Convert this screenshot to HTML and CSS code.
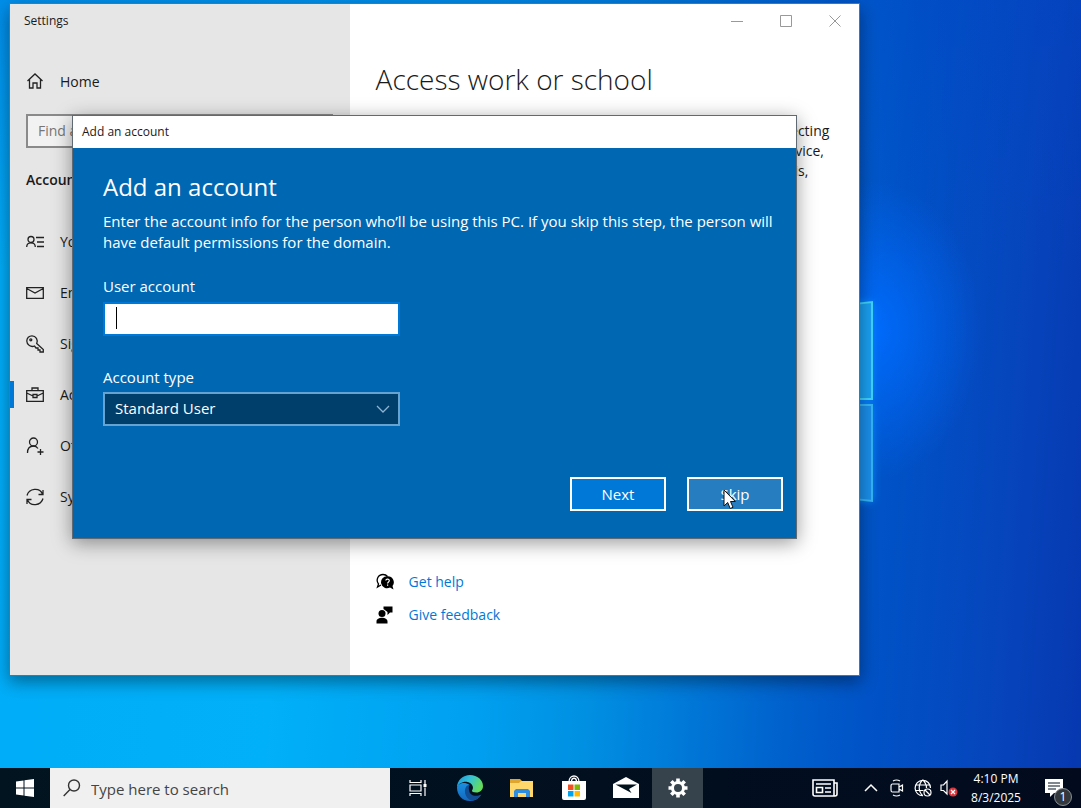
FILE: index.html
```html
<!DOCTYPE html>
<html lang="en">
  <head>
    <meta charset="UTF-8" />
    <meta name="viewport" content="width=device-width, initial-scale=1.0" />
    <title>Settings</title>
    <link rel="stylesheet" href="styles.css">
  </head>
  <body>
    <main class="desktop">
      <svg class="logo-light" viewBox="0 0 120 204">
        <g fill="#1a9ff0" stroke="#3fd3fa" stroke-width="2">
          <path d="M1 15 L118 2 V99 H1 Z" />
          <path d="M1 105 H118 V201 L1 188 Z" fill="#1a8ee8" stroke="#35b4f4" />
        </g>
      </svg>

      <section class="window">
        <aside class="sidebar">
          <div class="window-title">Settings</div>
          <a class="nav-link home" href="#">
            <svg class="icon" viewBox="0 0 18 18"><path d="M1.500 9 L9 2 L16.500 9 M3.500 7.500 V16 H7 V11 H11 V16 H14.500 V7.500" /></svg>
            Home
          </a>
          <input class="find" type="text" placeholder="Find a setting" aria-label="Find a setting">
          <h2 class="section-title">Accounts</h2>
          <nav class="nav">
            <a class="nav-link" href="#">
              <svg class="icon" viewBox="0 0 18 18"><circle cx="5" cy="6.500" r="3" /><path d="M.7 14 C.7 8.500 9.300 8.500 9.300 14 M10 4.500 H18 M11 9 H18 M11 13.500 H18" /></svg>
              Your info
            </a>
            <a class="nav-link" href="#">
              <svg class="icon" viewBox="0 0 18 18"><path d="M.7 3.700 H17.300 V14.300 H.7 Z M.7 4.500 L9 9 L17.300 4.500" /></svg>
              Email &amp; accounts
            </a>
            <a class="nav-link" href="#">
              <svg class="icon" viewBox="0 0 18 18"><path d="M10.700 8.500 L17.300 14.500 V17 H14 V15 H12 V13 H10 L8.500 11 C5 12.500 .8 10 .8 6 C.8 3 3 .8 6 .8 C10 .8 12.300 5 10.700 8.500 Z" /><circle cx="4.800" cy="4.800" r="1" /></svg>
              Sign-in options
            </a>
            <a class="nav-link active" href="#">
              <svg class="icon" viewBox="0 0 18 18"><path d="M.7 4.700 H17.300 V15.300 H.7 Z M6 4.500 V2 H12 V4.500 M.7 7 L7 10 M11 10 L17.300 7 M7 8.500 H11 V11.500 H7 Z" /></svg>
              Access work or school
            </a>
            <a class="nav-link" href="#">
              <svg class="icon" viewBox="0 0 18 18"><circle cx="7.500" cy="5" r="4" /><path d="M1.500 16 C1.500 11.500 4 9 7.500 9 C9.500 9 11 10 12 11.500 M14.500 12 V18 M11.500 15 H17.500" /></svg>
              Other users
            </a>
            <a class="nav-link" href="#">
              <svg class="icon" viewBox="0 0 18 18"><path d="M1 7.500 C3 .3 13.500 -1 16.500 6 M17 2 V6.500 H12.500 M17 10.500 C15 17.700 4.500 19 1.500 12 M1 16 V11.500 H5.500" /></svg>
              Sync your settings
            </a>
          </nav>
        </aside>

        <div class="page">
          <div class="window-controls">
            <button aria-label="Minimize"><svg viewBox="0 0 12 12"><path d="M0 6.500 H12" /></svg></button>
            <button aria-label="Maximize"><svg viewBox="0 0 12 12"><path d="M.5 .5 H11.500 V11.500 H.5 Z" /></svg></button>
            <button aria-label="Close"><svg viewBox="0 0 12 12"><path d="M.5 .5 L11.500 11.500 M11.500 .5 L.5 11.500" /></svg></button>
          </div>
          <h1>Access work or school</h1>
          <p class="intro">
            Get access to resources like email, apps, and the network. Connecting<br>
            means your work or school might control some things on this device,<br>
            such as which settings you can change. For specific info about this,<br>
            ask them.
          </p>
          <div class="help-links">
            <a href="#">
              <svg class="help-icon" viewBox="0 0 18 18">
                <path d="M5 12 L1.500 14 L2.500 11 C-.5 7 2 1.500 7 1.500 C9 1.500 10.500 2.200 11.500 3.500" fill="none" stroke="#000" stroke-width="1.300" />
                <path d="M11.500 3.300 A6 6 0 1 0 14 14.500 L17.500 16.500 L16.500 13 A6 6 0 0 0 11.500 3.300 Z" />
                <path d="M9.800 7.500 C10 5.500 13.500 5.700 13.300 7.800 C13.200 9 11.600 9 11.600 10.500 M11.600 11.500 V12.700" fill="none" stroke="#fff" stroke-width="1.200" />
              </svg>
              Get help
            </a>
            <a href="#">
              <svg class="help-icon" viewBox="0 0 18 18"><circle cx="6" cy="7.500" r="3.500" /><path d="M.5 17.500 V15.500 C.5 10.500 11.500 10.500 11.500 15.500 V17.500 Z M7.500 .5 H16.500 V6.500 H14 L11.500 9 V6 L7.500 3 Z" /></svg>
              Give feedback
            </a>
          </div>
        </div>
      </section>

      <form class="dialog" onsubmit="return false">
        <div class="dialog-title">Add an account</div>
        <div class="dialog-body">
          <h2>Add an account</h2>
          <p>Enter the account info for the person who’ll be using this PC. If you skip this step, the person will<br>have default permissions for the domain.</p>
          <div class="field">
            <label for="user">User account</label>
            <input id="user" type="text">
          </div>
          <div class="field">
            <label for="type">Account type</label>
            <select id="type">
              <option>Standard User</option>
              <option>Administrator</option>
            </select>
          </div>
          <div class="actions">
            <button class="next">Next</button>
            <button class="skip">Skip</button>
          </div>
        </div>
      </form>

      <svg class="cursor" viewBox="0 0 13 21"><path d="M1 1 V17 L4.700 13.500 L7.200 19.500 L10 18.300 L7.500 12.500 H12.300 Z" /></svg>
    </main>

    <footer class="taskbar">
      <button class="start" aria-label="Start">
        <svg width="18" height="18" viewBox="0 0 18 18"><path fill="#fff" d="M0 2.500 L7.500 1.500 V8.500 H0 Z M8.500 1.300 L18 0 V8.500 H8.500 Z M0 9.500 H7.500 V16.500 L0 15.500 Z M8.500 9.500 H18 V18 L8.500 16.700 Z" /></svg>
      </button>
      <label class="search">
        <svg width="18" height="18" viewBox="0 0 18 18"><circle cx="11" cy="6.500" r="5.500" /><path d="M7 10.500 L.7 17" /></svg>
        <input type="text" placeholder="Type here to search">
      </label>
      <div class="apps">
        <button aria-label="Task View">
          <svg width="18" height="18" viewBox="0 0 18 18"><path fill="none" stroke="#fff" stroke-width="1.200" d="M1 1 V3.500 H12 V1 M1 6 H12 V12 H1 Z M1 17 V14.500 H12 V17 M16 1 V5 M16 8.500 V17" /><path fill="#fff" d="M14.500 5 H17.500 V8 H14.500 Z" /></svg>
        </button>
        <button aria-label="Edge">
          <svg width="26" height="26" viewBox="0 0 26 26">
            <defs>
              <linearGradient id="edge-top" x1="0" y1="0" x2="1" y2=".4"><stop offset="0" stop-color="#1b93dd" /><stop offset=".5" stop-color="#35c1d6" /><stop offset="1" stop-color="#63dc5c" /></linearGradient>
              <linearGradient id="edge-side" x1="0" y1="0" x2="0" y2="1"><stop offset="0" stop-color="#1b8fe0" /><stop offset="1" stop-color="#1268be" /></linearGradient>
            </defs>
            <path fill="url(#edge-side)" d="M0 12.500 C1 8 8 6.500 12.500 10 C9 12 9 18 13 20.500 C17 23 21 22 24 20 C21 24.500 17 26 13 26 C5 26 0 20 0 12.500 Z" />
            <path fill="#124e93" d="M9 12 C6 17 9.500 24.500 15 25.700 C19 25 22 23.500 24.500 19.500 C18 22.500 12.500 20 12 15 C11.500 12 12 11.500 12.500 10 C11 10 10 10.500 9 12 Z" />
            <path fill="url(#edge-top)" d="M0 12.500 C0 5 6 0 13 0 C20.500 0 26 5 26 11 C26 15 23 17.500 19.500 17.500 C16 17.500 14.800 16.500 15 15.500 C17.500 12.500 15 8 10.500 7 C6 6.200 1.500 8.500 0 12.500 Z" />
          </svg>
        </button>
        <button aria-label="File Explorer">
          <svg width="24" height="20" viewBox="0 0 24 20"><path fill="#e0a52e" d="M0 1 H10 L12 3 H23 V19 H0 Z" /><path fill="#ffd76a" d="M0 5 H9 L11 3 H23 V19 H0 Z" /><path fill="#2f8de0" d="M4 19 V13 L6 11 H18 L20 13 V19 H16 V15 H8 V19 Z" /></svg>
        </button>
        <button aria-label="Store">
          <svg width="26" height="26" viewBox="0 0 26 26"><path fill="none" stroke="#fff" stroke-width="1.300" d="M8 7 C8 -1 18 -1 18 7 M10.500 7 C10.500 2 15.500 2 15.500 7" /><path fill="#fff" d="M1 6 H25 V23 Q25 25 23 25 H3 Q1 25 1 23 Z" /><path fill="#f25022" d="M7 9.500 H12.500 V15 H7 Z" /><path fill="#7fba00" d="M13.500 9.500 H19 V15 H13.500 Z" /><path fill="#00a4ef" d="M7 16 H12.500 V21.500 H7 Z" /><path fill="#ffb900" d="M13.500 16 H19 V21.500 H13.500 Z" /></svg>
        </button>
        <button aria-label="Mail">
          <svg width="26" height="22" viewBox="0 0 26 22"><path fill="#fff" d="M0 7 L13 0 L26 7 V21 H0 Z" /><path fill="#02121d" d="M2.500 7.500 H24 L16 12 L18.500 16 Z" /></svg>
        </button>
        <button class="running" aria-label="Settings">
          <svg width="20" height="20" viewBox="0 0 20 20"><circle cx="10" cy="10" r="5.500" fill="none" stroke="#fff" stroke-width="3" /><path stroke="#fff" stroke-width="3.600" d="M10 .5 V4 M10 16 V19.500 M.5 10 H4 M16 10 H19.500 M3.300 3.300 L5.600 5.600 M14.400 14.400 L16.700 16.700 M3.300 16.700 L5.600 14.400 M14.400 5.600 L16.700 3.300" /></svg>
        </button>
      </div>
      <div class="tray">
        <button class="news" aria-label="News">
          <svg width="26" height="18" viewBox="0 0 26 18"><path d="M22 17 H3 Q1 17 1 15 V1 H22 V17 H23 Q25 17 25 15 V4 H22 M4 5 H19 M4.500 8.500 H10.500 V13.500 H4.500 Z M13 9 H19 M13 13 H19" stroke-width="1.600" /></svg>
        </button>
        <button aria-label="Show hidden icons">
          <svg width="14" height="18" viewBox="0 0 14 18"><path d="M1 12 L7 6 L13 12" stroke-width="1.500" /></svg>
        </button>
        <button aria-label="Meet Now">
          <svg width="14" height="18" viewBox="0 0 14 18"><path d="M3 2 Q6.500 0 10 2 M3 16 Q6.500 18 10 16 M2.500 5 H9 V13 H2.500 Q1 13 1 11 V7 Q1 5 2.500 5 Z M9 8 L12.500 6 V12 L9 10" /></svg>
        </button>
        <button aria-label="Network">
          <svg width="18" height="18" viewBox="0 0 18 18"><path d="M16.500 9 A7.700 7.700 0 1 0 9 16.700 M8.800 1 C4 5 4 12.500 8.800 16.700 M8.800 1 C11.500 3.500 12.500 6 12.500 9 M1.500 6 H16 M1.500 11.500 H9.500" /><circle cx="13.500" cy="13.500" r="3.500" /><path d="M11 11 L16 16" /></svg>
        </button>
        <button aria-label="Volume">
          <svg width="18" height="18" viewBox="0 0 18 18"><path d="M1 6 H3.500 L7 2 V15 L3.500 11.500 H1 Z" /><circle cx="13" cy="13" r="4.500" fill="#d9363e" stroke="none" /><path d="M11 11 L15 15 M15 11 L11 15" /></svg>
        </button>
        <div class="clock"><span>4:10 PM</span><span>8/3/2025</span></div>
        <button class="notifications" aria-label="Notifications">
          <svg width="18" height="18" viewBox="0 0 18 18"><path d="M0 0 H18 V14 H9 L5 18 V14 H0 Z" fill="#fff" stroke="none" /><path d="M3 4 H15 M3 7 H15 M3 10 H11" stroke="#02101f" /></svg>
          <span class="badge">1</span>
        </button>
      </div>
    </footer>
  </body>
</html>
```
FILE: styles.css
```css
* {
  box-sizing: border-box;
}
body {
  margin: 0;
  height: 100vh;
  display: flex;
  flex-direction: column;
  overflow: hidden;
  font-family: "Open Sans", "Noto Sans", sans-serif;
  font-size: 14px;
  color: #1a1a1a;
}
h1,
h2,
p {
  margin: 0;
}
button,
input,
select {
  font: inherit;
}
button {
  padding: 0;
  border: none;
  background: none;
  color: inherit;
}
a {
  color: inherit;
  text-decoration: none;
}

/* desktop */
.desktop {
  position: relative;
  flex: 1;
  min-height: 0;
  overflow: hidden;
  background:
    radial-gradient(ellipse 110px 150px at 872px 330px, rgba(0, 108, 255, 0.95), rgba(0, 90, 240, 0)),
    linear-gradient(180deg, rgba(0, 70, 200, 0.3), rgba(0, 70, 200, 0) 35%),
    linear-gradient(94deg, #00adf8 0%, #00b0f8 28%, #00a0f0 46%, #0090e2 56%, #0078d8 65%, #0060cc 74%, #0052c6 81%, #0645bc 92%, #0638b0 100%);
}
.logo-light {
  position: absolute;
  left: 754px;
  top: 300px;
  width: 120px;
  height: 204px;
  filter: drop-shadow(0 0 4px #0a8cff);
}

/* settings window */
.window {
  position: absolute;
  inset: 3px 221px 92px 9px;
  display: flex;
  border: 1px solid #3a7ca8;
  background: #fff;
  box-shadow: 0 6px 16px rgba(0, 0, 0, 0.4);
}
.sidebar {
  width: 40%;
  background: #e6e6e6;
}
.window-title {
  padding-left: 14px;
  font-size: 12px;
  line-height: 34px;
}
.nav-link {
  display: flex;
  align-items: center;
  gap: 16px;
  height: 51px;
  padding-left: 16px;
  white-space: nowrap;
}
.home {
  height: 40px;
  margin-top: 23px;
}
.icon {
  width: 18px;
  height: 18px;
  fill: none;
  stroke: #222;
  stroke-width: 1.3;
}
.find {
  display: block;
  width: calc(100% - 33px);
  height: 34px;
  margin: 13px 16px 12px;
  padding: 0 10px 2px;
  border: 2px solid #8a8a8a;
  background: #f2f2f2;
}
.find::placeholder {
  color: #767676;
}
.section-title {
  padding-left: 16px;
  font-size: 14px;
  font-weight: 600;
  line-height: 40px;
}
.nav {
  margin-top: 16px;
}
.active {
  padding-left: 12px;
  border-left: 4px solid;
  border-image: linear-gradient(transparent 25%, #0078d7 25%, #0078d7 75%, transparent 75%) 1;
}
.page {
  flex: 1;
  display: flex;
  flex-direction: column;
  padding: 0 0 44px 26px;
}
.window-controls {
  display: flex;
  justify-content: flex-end;
  height: 34px;
}
.window-controls button {
  width: 49px;
}
.window-controls svg {
  width: 12px;
  height: 12px;
  fill: none;
  stroke: #999;
}
h1 {
  margin-top: 21px;
  font-size: 28px;
  font-weight: 300;
  line-height: 40px;
}
.intro {
  margin-top: 22px;
  line-height: 20px;
  white-space: nowrap;
}
.help-links {
  margin-top: auto;
}
.help-links a {
  display: flex;
  align-items: center;
  gap: 15px;
  height: 33px;
  color: #0078d7;
}
.help-icon {
  width: 18px;
  height: 18px;
}

/* add an account */
.dialog {
  position: absolute;
  left: 72px;
  right: 284px;
  top: 115px;
  border: 1px solid #5f6a73;
  background: #0067b3;
  box-shadow: 0 4px 18px rgba(0, 0, 0, 0.4);
  color: #fff;
  font-size: 15px;
}
.dialog-title {
  padding-left: 9px;
  background: #fff;
  color: #1a1a1a;
  font-size: 12px;
  line-height: 32px;
}
.dialog-body {
  padding: 21px 13px 27px 30px;
}
.dialog-body h2 {
  font-size: 24px;
  font-weight: 400;
  line-height: 36px;
}
.dialog-body p {
  margin-top: 6px;
  line-height: 21px;
  white-space: nowrap;
}
.field {
  margin-top: 22px;
}
.field + .field {
  margin-top: 30px;
}
.field label {
  display: block;
  line-height: 22px;
}
.field input,
.field select {
  display: block;
  width: 297px;
  height: 34px;
  margin-top: 5px;
  padding: 0 10px 2px;
  border: 2px solid #0078d7;
  border-radius: 0;
  outline: none;
}
/* text cursor of the focused box */
.field input {
  background: linear-gradient(#000, #000) 11px 3px / 1px 22px no-repeat #fff;
}
.field select {
  margin-top: 4px;
  appearance: none;
  border-color: #66a3d1;
  background: #003e6b url("data:image/svg+xml,%3Csvg xmlns='http://www.w3.org/2000/svg' width='14' height='8'%3E%3Cpath d='M1 1l6 6 6-6' fill='none' stroke='%238fb4cf' stroke-width='1.300'/%3E%3C/svg%3E") right 8px center no-repeat;
  color: #fff;
}
.actions {
  display: flex;
  justify-content: flex-end;
  gap: 21px;
  margin-top: 51px;
}
.actions button {
  width: 96px;
  height: 34px;
  border: 2px solid #fff;
}
.next {
  background: #0078d7;
}
.skip {
  background: #267dbf;
}
.cursor {
  position: absolute;
  left: 723px;
  top: 489px;
  width: 13px;
  height: 21px;
  fill: #fff;
  stroke: #111;
}

/* taskbar */
.taskbar {
  display: flex;
  height: 40px;
  background: linear-gradient(90deg, #01141f, #020b1e);
  color: #fff;
}
.taskbar button {
  display: flex;
  align-items: center;
  justify-content: center;
}
.start {
  width: 50px;
}
.search {
  display: flex;
  align-items: center;
  gap: 10px;
  width: 340px;
  padding-left: 13px;
  background: #f0f0f0;
}
.search svg {
  fill: none;
  stroke: #333;
  stroke-width: 1.4;
}
.search input {
  flex: 1;
  padding: 2px 0 0;
  border: none;
  background: none;
  outline: none;
  font-size: 15px;
}
.search input::placeholder {
  color: #444;
}
.apps {
  display: flex;
  gap: 1px;
  padding-left: 2px;
}
.apps button {
  width: 51px;
}
.taskbar .running {
  background: #36434d;
}
.tray {
  display: flex;
  align-items: center;
  margin-left: auto;
  padding-right: 3px;
}
.tray button {
  width: 26px;
  height: 40px;
}
.tray svg {
  fill: none;
  stroke: #fff;
  stroke-width: 1.2;
}
.tray .news {
  width: 66px;
}
.clock {
  display: flex;
  flex-direction: column;
  width: 68px;
  font-size: 12px;
  line-height: 19px;
  text-align: center;
}
.tray .notifications {
  position: relative;
  width: 48px;
}
.badge {
  position: absolute;
  right: 6px;
  bottom: 2px;
  width: 18px;
  border: 1px solid #8a8f94;
  border-radius: 50%;
  background: #33383d;
  font-size: 12px;
  line-height: 16px;
  text-align: center;
}
```
